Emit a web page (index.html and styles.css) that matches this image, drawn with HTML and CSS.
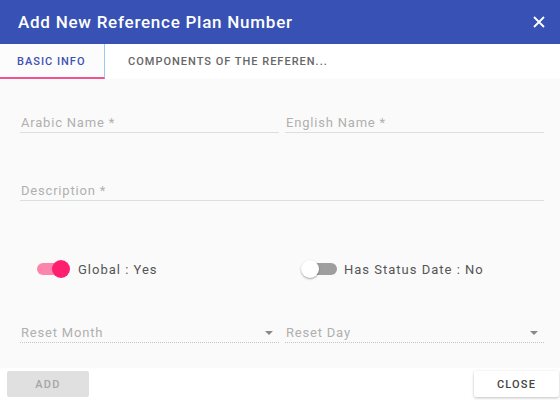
FILE: index.html
```html
<!DOCTYPE html>
<html>
<head>
<meta charset="utf-8">
<link rel="stylesheet" href="styles.css">
</head>
<body>
<div class="dialog">
  <header class="head">
    <h1 class="title">Add New Reference Plan Number</h1>
    <svg class="x" width="14" height="14" viewBox="0 0 14 14"><path d="M2 2L12 12M12 2L2 12" stroke="#fff" stroke-width="1.8"/></svg>
  </header>
  <nav class="tabs">
    <div class="tab active">BASIC INFO</div>
    <div class="tab">COMPONENTS OF THE REFEREN...</div>
  </nav>
  <main class="body">
    <div class="row two">
      <div class="field"><span class="label">Arabic Name *</span></div>
      <div class="field"><span class="label">English Name *</span></div>
    </div>
    <div class="row one">
      <div class="field"><span class="label">Description *</span></div>
    </div>
    <div class="row two toggles">
      <div class="toggle on"><span class="track"><span class="thumb"></span></span><span class="tlabel">Global : Yes</span></div>
      <div class="toggle off"><span class="track"><span class="thumb"></span></span><span class="tlabel">Has Status Date : No</span></div>
    </div>
    <div class="row two">
      <div class="field select"><span class="label">Reset Month</span><span class="caret"></span></div>
      <div class="field select"><span class="label">Reset Day</span><span class="caret"></span></div>
    </div>
  </main>
  <footer class="foot">
    <button class="btn add">ADD</button>
    <button class="btn close">CLOSE</button>
  </footer>
</div>
</body>
</html>
```
FILE: styles.css
```css
* { box-sizing: border-box; }
html, body { margin: 0; padding: 0; }
body { width: 560px; height: 400px; overflow: hidden; font-family: Roboto, "Liberation Sans", sans-serif; background: #fff; }
.dialog { display: flex; flex-direction: column; height: 400px; }
.head { height: 44px; background: #3752b4; display: flex; align-items: center; justify-content: space-between; padding: 0 14px 0 18px; }
.title { margin: 0; color: #fff; font-size: 17px; font-weight: 500; letter-spacing: 0.75px; }
.x { display: block; }
.tabs { height: 35px; display: flex; background: #fff; }
.tab { display: flex; align-items: center; font-size: 11px; font-weight: 500; color: #666; letter-spacing: 1px; }
.tab.active { width: 105px; padding-left: 17px; color: #3f51b5; background: #fcfcfd; border-right: 1px solid #9cc8f5; border-bottom: 2px solid #f0558f; padding-top: 2px; }
.tab + .tab { padding-left: 23px; }
.body { flex: 1; background: #fafafa; padding: 37px 16px 0 20px; display: flex; flex-direction: column; }
.row { display: flex; gap: 6px; }
.row.two > *, .row.one > * { flex: 1; }
.field { border-bottom: 1px solid #dedede; height: 17px; display: flex; align-items: flex-end; padding-bottom: 2px; position: relative; }
.row + .row { margin-top: 51px; }
.label { font-size: 13px; color: #b0b0b0; padding-left: 1px; line-height: 14px; letter-spacing: 0.8px; }
.toggles { margin-top: 59px !important; height: 18px; }
.toggle { display: flex; align-items: center; }
.toggle.on { padding-left: 17px; }
.toggle.off { padding-left: 11px; }
.track { width: 32px; height: 12px; border-radius: 6px; position: relative; display: block; flex: none; }
.thumb { position: absolute; top: -3px; width: 18px; height: 18px; border-radius: 50%; }
.on .track { background: #ff84ac; }
.on .thumb { right: -1px; background: #ff1f6f; }
.off .track { width: 30px; background: #9e9e9e; margin-left: 8px; }
.off .thumb { left: -6px; background: #fff; box-shadow: 0 1px 2px rgba(0,0,0,0.35); }
.tlabel { font-size: 13px; color: #555; margin-left: 9px; letter-spacing: 1px; }
.toggle.off .tlabel { margin-left: 7px; }
.row.toggles + .row { margin-top: 48px; }
.select { border-bottom: 1px dotted #c6c6c6; }
.caret { position: absolute; right: 6px; bottom: 7px; width: 0; height: 0; border-left: 4px solid transparent; border-right: 4px solid transparent; border-top: 4px solid #888; }
.foot { height: 32px; display: flex; justify-content: space-between; align-items: center; padding: 0 1px 0 7px; background: #fff; }
.btn { font-family: Roboto, "Liberation Sans", sans-serif; font-size: 11px; font-weight: 500; border: none; border-radius: 2px; height: 26px; letter-spacing: 1.2px; }
.add { width: 82px; background: #e0e0e0; color: #a6a6a6; }
.close { width: 85px; background: #fff; color: #444; box-shadow: 0 1px 3px rgba(0,0,0,0.25); }
```
